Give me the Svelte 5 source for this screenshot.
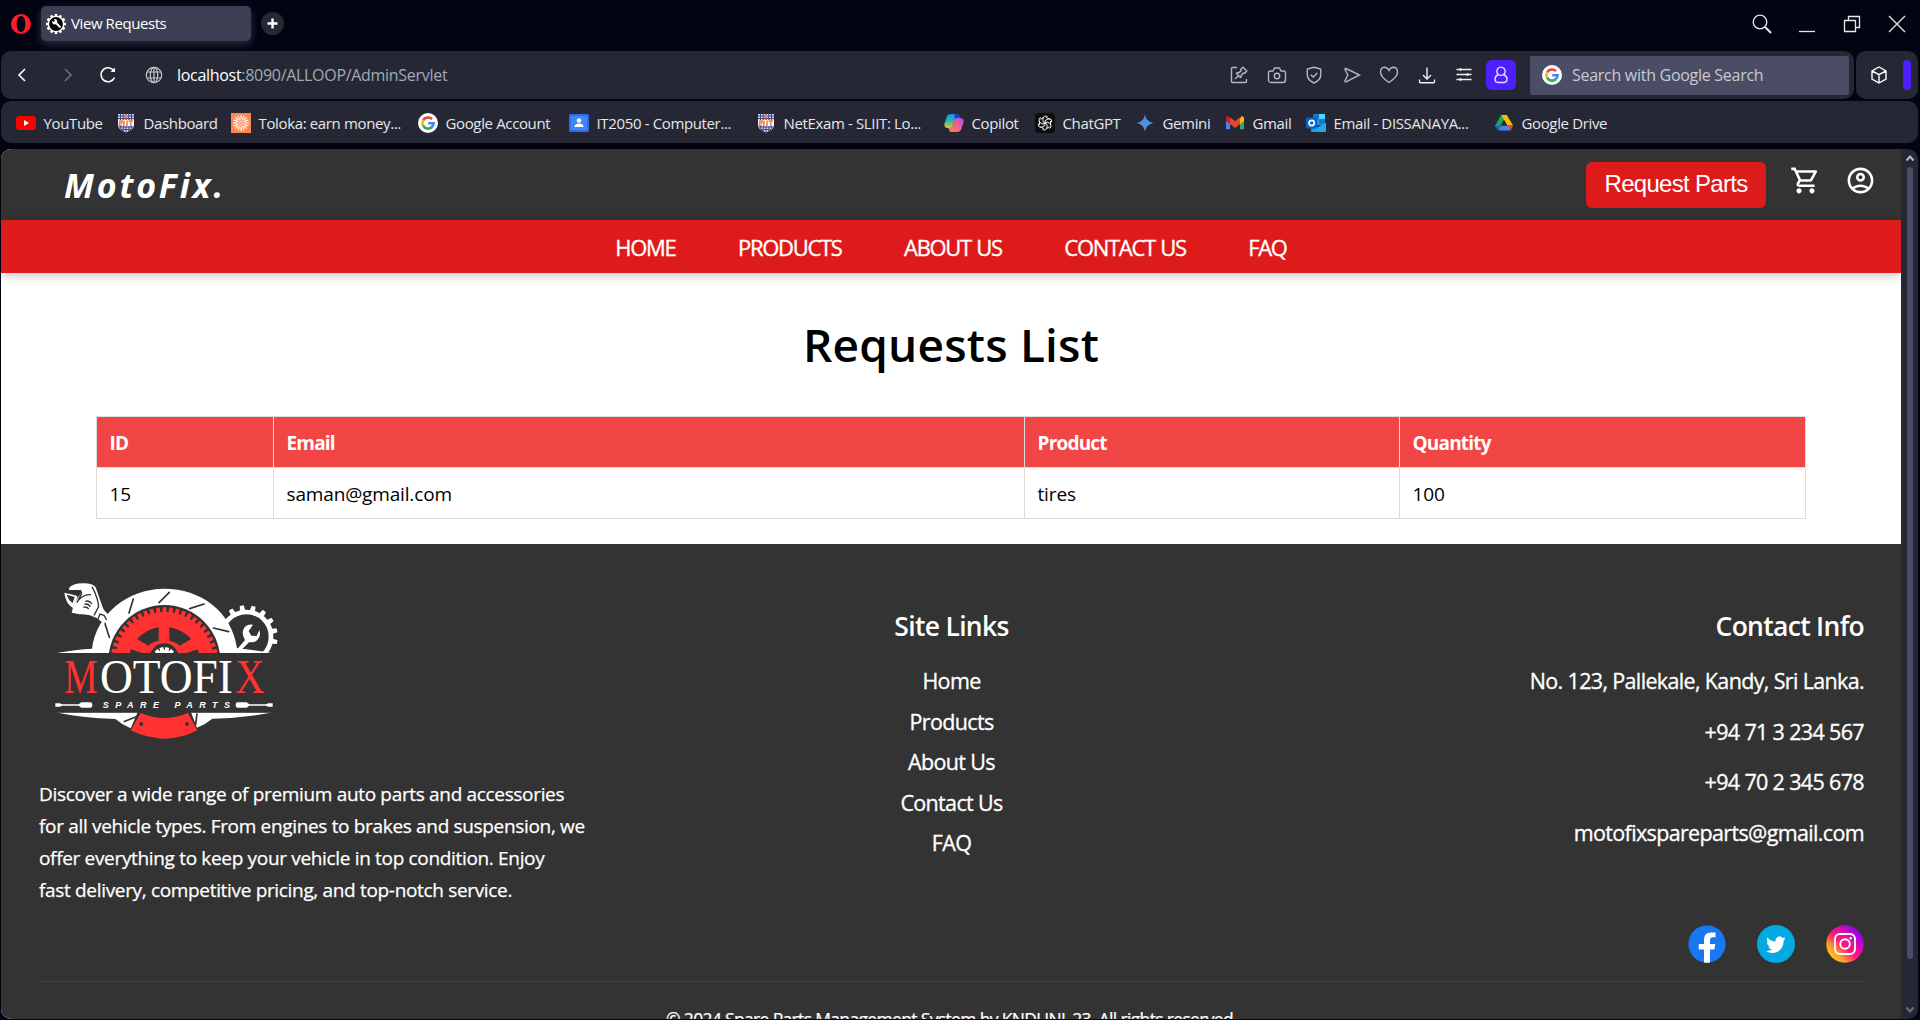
<script>
  const bookmarks = [
    { icon: 'youtube', label: 'YouTube' },
    { icon: 'shield', label: 'Dashboard' },
    { icon: 'toloka', label: 'Toloka: earn money...' },
    { icon: 'google', label: 'Google Account' },
    { icon: 'classroom', label: 'IT2050 - Computer...' },
    { icon: 'shield', label: 'NetExam - SLIIT: Lo...' },
    { icon: 'copilot', label: 'Copilot' },
    { icon: 'chatgpt', label: 'ChatGPT' },
    { icon: 'gemini', label: 'Gemini' },
    { icon: 'gmail', label: 'Gmail' },
    { icon: 'outlook', label: 'Email - DISSANAYA...' },
    { icon: 'drive', label: 'Google Drive' }
  ];
  const navItems = ['HOME', 'PRODUCTS', 'ABOUT US', 'CONTACT US', 'FAQ'];
  const siteLinks = ['Home', 'Products', 'About Us', 'Contact Us', 'FAQ'];
  const contacts = [
    'No. 123, Pallekale, Kandy, Sri Lanka.',
    '+94 71 3 234 567',
    '+94 70 2 345 678',
    'motofixspareparts@gmail.com'
  ];
  const requests = [{ id: 15, email: 'saman@gmail.com', product: 'tires', quantity: 100 }];

  // Gear teeth are laid out around a circle, from one angle to another.
  const spread = (from, to, count) =>
    Array.from({ length: count }, (_, i) => from + ((to - from) * i) / (count - 1));
  const discTeeth = spread(-86, 86, 25);
  const cogTeeth = spread(-30, 100, 7);
  const hubTeeth = spread(-75, 75, 6);
  const faviconTeeth = spread(0, 330, 12);
  const rays = spread(0, 337.5, 16);
  const petals = [0, 60, 120, 180, 240, 300];
</script>

{#snippet googleG()}
  <svg class="i20" viewBox="0 0 20 20">
    <circle cx="10" cy="10" r="10" fill="#fff" />
    <g fill="none" stroke-width="2.6">
      <path d="M14 6.2A5.6 5.6 0 0 0 5.1 7.3" stroke="#ea4335" />
      <path d="M5.2 7.2A5.6 5.6 0 0 0 5.2 12.8" stroke="#fbbc05" />
      <path d="M5.1 12.7A5.6 5.6 0 0 0 13.7 14.2" stroke="#34a853" />
      <path d="M13.4 14.4A5.6 5.6 0 0 0 15.6 10.2H10.2" stroke="#4285f4" />
    </g>
  </svg>
{/snippet}

{#snippet brand(name)}
  {#if name === 'google'}
    {@render googleG()}
  {:else}
    <svg class="i20" viewBox="0 0 20 20">
      {#if name === 'youtube'}
        <rect y="3" width="20" height="14" rx="3.6" fill="#f00" />
        <path d="M8 7l5 3-5 3z" fill="#fff" />
      {:else if name === 'shield'}
        <path d="M2 1h16v12q0 3-8 6.500q-8-3.500-8-6.500z" fill="#d9daf0" />
        <path d="M4.500 1v15M7.200 1v17M10 1v18M12.800 1v17M15.500 1v15M2 3h16M2 5.500h16M2 14h16M5 16.500h10" stroke="#46488f" stroke-width="1.100" />
        <rect x="2" y="7" width="16" height="6" fill="#fff" />
        <path d="M3 8h3v2H3.500v2.500H6M8 7.500V13M11 7.500V13M12.500 8H17M14.800 8v5" fill="none" stroke="#f08030" stroke-width="1.500" />
        <circle cx="10" cy="3.600" r="1.800" fill="#f57c20" />
      {:else if name === 'toloka'}
        <rect width="20" height="20" fill="#ff8551" />
        {#each rays as a}
          <path d="M10 6.500V2" stroke="#fff" stroke-width="1.200" transform="rotate({a} 10 10)" />
        {/each}
        <circle cx="10" cy="10" r="3.600" fill="#ffb08c" />
      {:else if name === 'classroom'}
        <rect y="1" width="20" height="18" rx="1.500" fill="#2a6fe8" />
        <rect x="2" y="3" width="16" height="14" fill="#4285f4" />
        <circle cx="10" cy="7.500" r="2.300" fill="#fff" />
        <path d="M5.500 14q0-3.500 4.500-3.500t4.500 3.500z" fill="#fff" />
      {:else if name === 'copilot'}
        <defs>
          <linearGradient id="cpa" x1="0" y1="0" x2="0" y2="1">
            <stop offset="0" stop-color="#1b8ff0" /><stop offset=".5" stop-color="#2bb8b0" /><stop offset="1" stop-color="#f0c020" />
          </linearGradient>
          <linearGradient id="cpb" x1="1" y1="0" x2="0" y2="1">
            <stop offset="0" stop-color="#a450f0" /><stop offset=".5" stop-color="#f06090" /><stop offset="1" stop-color="#f88a30" />
          </linearGradient>
        </defs>
        <path d="M13.500 1q1.600.2 2.200 4h-3q-2 .3-2.700 3l-1.600 5.400Q7.600 15 5.400 15H3Q0 14.500.4 11L2.700 4Q3.700 1 6.500 1z" fill="url(#cpa)" />
        <path d="M10.500 1h3q1.600.2 2.200 4h-3q-1.500.2-2.200 1.500z" fill="#1548b8" />
        <path d="M12.700 5H17q3 .5 2.600 4l-2.300 7q-1 3-3.800 3H7q-2-.4-2.500-4 3 .3 4-2l1.800-5.500Q11 5.200 12.700 5z" fill="url(#cpb)" />
      {:else if name === 'chatgpt'}
        <rect width="20" height="20" rx="4" fill="#0d0d0d" />
        {#each petals as a}
          <path d="M8 8.800V5.600a2.700 2.700 0 0 1 4.700-1.700M8 8.800l3 1.700M11 4.300l3.600 2" fill="none" stroke="#fff" stroke-width=".9" transform="rotate({a} 10 10)" />
        {/each}
      {:else if name === 'gemini'}
        <defs>
          <linearGradient id="gem"><stop stop-color="#8a72c8" /><stop offset=".5" stop-color="#4f8fe0" /><stop offset="1" stop-color="#35a0d8" /></linearGradient>
        </defs>
        <path d="M10 1.500q1 7 8.500 8.500-7.500 1.500-8.500 8.500-1-7-8.500-8.500 7.500-1.500 8.500-8.500z" fill="url(#gem)" />
      {:else if name === 'gmail'}
        <path d="M1 5v11.300h4V9z" fill="#4285f4" />
        <path d="M19 5v11.300h-4V9z" fill="#34a853" />
        <path d="M15 6v5l4-3V5q-.5-2.500-3-1.500z" fill="#fbbc04" />
        <path d="M5 6v5L1 8V5q.5-2.500 3-1.500z" fill="#c5221f" />
        <path d="M5 11V4.300l5 3.900 5-3.900V11l-5 3.900z" fill="#ea4335" />
      {:else if name === 'outlook'}
        <path d="M7 1h12v11H7z" fill="#28a8ea" />
        <path d="M7 1h6v5H7zM13 6h6v5h-6z" fill="#0f78d0" />
        <path d="M13 1h6v5h-6z" fill="#50d9ff" />
        <path d="M5 10l7.500 4L20 9.500V18q0 1-1 1H6q-1 0-1-1z" fill="#1490df" />
        <path d="M5 18.500L20 9.500V18q0 1-1 1z" fill="#28a8ea" />
        <rect y="4.500" width="11.500" height="11" rx="1" fill="#0a64c0" />
        <circle cx="5.700" cy="10" r="2.600" fill="none" stroke="#fff" stroke-width="1.600" />
      {:else if name === 'drive'}
        <path d="M7.200 2h5.600L4.200 17 1 12.800z" fill="#1ea362" />
        <path d="M7.200 2h5.600L19 12.500h-5.600z" fill="#fbbc04" />
        <path d="M4.500 17.500l2.500-5h12l-2.600 5z" fill="#4285f4" />
        <path d="M1 12.500h5.800l-2.800 5z" fill="#1967d2" />
        <path d="M14 12.500h5l-2.600 5z" fill="#ea4335" />
        <path d="M10 7.200l3 5.300H7z" fill="#252834" />
      {/if}
    </svg>
  {/if}
{/snippet}

<div class="window">
  <div class="titlebar">
    <svg class="opera" viewBox="0 0 20 20">
      <path fill-rule="evenodd" d="M10 0a10 10 0 1 0 0 20 10 10 0 0 0 0-20zm0 2c2.800 0 4.300 3.600 4.300 8s-1.500 8-4.300 8-4.300-3.600-4.300-8 1.500-8 4.300-8z" fill="#ff1b2d" />
    </svg>
    <div class="tab">
      <svg class="i20" viewBox="0 0 20 20">
        {#each faviconTeeth as a}
          <rect x="8.700" y="0" width="2.600" height="4" fill="#fff" transform="rotate({a} 10 10)" />
        {/each}
        <circle cx="10" cy="10" r="7.600" fill="#000" stroke="#fff" stroke-width="1.400" />
        <path d="M6 6.500l1.500 1.500L9 6.500 7.800 5.200q3-.6 3.600 2-.2 1-.2 1.500l3.600 3.600q.6 1.800-1.200 1.700L9.800 10.300q-3.800.8-3.800-3.800z" fill="#fff" />
      </svg>
      <span>View Requests</span>
    </div>
    <div class="newtab">
      <svg viewBox="0 0 23 23"><path d="M11.500 6.500v10M6.500 11.500h10" stroke="#fff" stroke-width="2.400" /></svg>
    </div>
    <div class="wincontrols">
      <svg viewBox="0 0 20 20"><circle cx="8" cy="8" r="6.800" /><path d="M13 13l6 6" stroke-width="2" /></svg>
      <svg viewBox="0 0 20 20"><path d="M2 17.500h16" /></svg>
      <svg viewBox="0 0 20 20"><path d="M2.500 6.500h11v11h-11zM6.500 6.500v-4h11v11h-4" /></svg>
      <svg viewBox="0 0 20 20"><path d="M2 2l16 16M18 2L2 18" /></svg>
    </div>
  </div>

  <div class="toolbar">
    <div class="address">
      <div class="navbtns">
        <svg viewBox="0 0 20 20"><path d="M13 4l-6 6 6 6" stroke="#fff" /></svg>
        <svg viewBox="0 0 20 20"><path d="M7 4l6 6-6 6" stroke="#6b6e79" /></svg>
        <svg viewBox="0 0 20 20"><path d="M16.500 12.500A7 7 0 1 1 16 6" stroke="#fff" /><path d="M12.500 7H17V2.500z" fill="#fff" /></svg>
        <svg viewBox="0 0 20 20"><g stroke="#c6c8ce" stroke-width="1.200"><circle cx="10" cy="10" r="7.700" /><ellipse cx="10" cy="10" rx="3.700" ry="7.700" /><path d="M10 2.300v15.400M3.200 7h13.600M3.200 13h13.600" /></g></svg>
      </div>
      <div class="url"><b>localhost</b>:8090/ALLOOP/AdminServlet</div>
      <div class="tools">
        <svg viewBox="0 0 20 20"><path d="M8 2.500H3.500q-1 0-1 1v13q0 1 1 1h13q1 0 1-1V14M6 14l3.600-3.600M7.500 8.500l4 4q1.500-1 .9-2.500l1.900-2 1.200.4L17.800 6 14 2.200l-2.300 2.300.4 1.200-2 1.900Q8.500 7 7.500 8.500z" /></svg>
        <svg viewBox="0 0 20 20"><path d="M3.500 6H6l1.500-3h5L14 6h2.500Q18.500 6 18.500 8v7q0 2.500-2.500 2.500H4Q1.500 17.500 1.500 15V8q0-2 2-2z" /><circle cx="10" cy="11" r="2.700" /></svg>
        <svg viewBox="0 0 20 20"><path d="M10 2.200L16.700 4v6q0 5-6.700 8-6.700-3-6.700-8V4zM6.800 9.700l2.500 2.400 4-4" /></svg>
        <svg viewBox="0 0 20 20"><path d="M4 3.500L17.500 10 4 16.800q-1.300.4-1-1L5.800 10 3 4.300q-.1-1.300 1-.8z" /></svg>
        <svg viewBox="0 0 20 20"><path d="M10 17.500Q1.500 12 1.500 7q0-4.500 4-4.700Q8.500 2.300 10 5.500q1.500-3.200 4.500-3.200 4 .2 4 4.700 0 5-8.500 10.500z" /></svg>
        <svg viewBox="0 0 20 20"><g stroke="#f0f0f2"><path d="M10 2.500v11M6 10l4 4 4-4M2.500 14.500v2.200q0 1 1 1h13q1 0 1-1v-2.200" /></g></svg>
        <svg viewBox="0 0 20 20"><g stroke="#f0f0f2"><path d="M2.500 4.500h15M2.500 9.500h15M2.500 14.500h15M6.500 3v3M13.500 8v3M6.500 13v3" /></g></svg>
      </div>
      <div class="profile">
        <svg viewBox="0 0 20 20"><path d="M7.300 9.500a4.200 4.200 0 1 1 5.400 0q3.300 1.500 3.300 4.800Q15.800 17.500 13 17.500H7q-2.800 0-3-3.200 0-3.300 3.300-4.800 2.700 1.700 5.400 0" /></svg>
      </div>
      <div class="search">
        {@render googleG()}
        <span>Search with Google Search</span>
      </div>
    </div>
    <div class="side">
      <svg viewBox="0 0 20 20"><path d="M10 2l7 3.800v8.400L10 18l-7-3.800V5.800zM3 5.800l7 3.900 7-3.900M10 9.700V18" /></svg>
      <div class="pill"></div>
    </div>
  </div>

  <div class="bookmarks">
    {#each bookmarks as b}
      <div class="bookmark">{@render brand(b.icon)}<span>{b.label}</span></div>
    {/each}
  </div>

  <div class="viewport">
    <div class="page">
      <header>
        <div class="logo">MotoFix.</div>
        <div class="actions">
          <button>Request Parts</button>
          <svg class="cart" viewBox="0 0 24 24"><path d="M15.550 13c.75 0 1.410-.41 1.750-1.030l3.580-6.490A.996.996 0 0 0 20.010 4H5.210l-.94-2H1v2h2l3.600 7.590-1.350 2.440C4.520 15.370 5.480 17 7 17h12v-2H7l1.100-2h7.450zM6.160 6h12.150l-2.760 5H8.530L6.160 6zM7 18c-1.100 0-1.990.9-1.990 2S5.900 22 7 22s2-.9 2-2-.9-2-2-2zm10 0c-1.100 0-1.990.9-1.990 2s.89 2 1.990 2 2-.9 2-2-.9-2-2-2z" /></svg>
          <svg class="account" viewBox="0 0 24 24"><path d="M12 2C6.480 2 2 6.480 2 12s4.480 10 10 10 10-4.480 10-10S17.520 2 12 2zM7.350 18.500C8.660 17.560 10.260 17 12 17s3.340.56 4.650 1.500C15.340 19.440 13.740 20 12 20s-3.340-.56-4.650-1.500zm10.790-1.380C16.450 15.800 14.320 15 12 15s-4.450.8-6.140 2.120C4.700 15.730 4 13.950 4 12c0-4.420 3.580-8 8-8s8 3.580 8 8c0 1.950-.7 3.730-1.860 5.120zM12 6c-1.930 0-3.500 1.570-3.500 3.500S10.070 13 12 13s3.500-1.570 3.500-3.500S13.930 6 12 6zm0 5c-.83 0-1.500-.67-1.500-1.500S11.170 8 12 8s1.500.67 1.500 1.500S12.830 11 12 11z" /></svg>
        </div>
      </header>
      <nav>
        {#each navItems as item}<a href="#top">{item}</a>{/each}
      </nav>

      <main>
        <h1>Requests List</h1>
        <table>
          <colgroup><col class="c1" /><col class="c2" /><col class="c3" /><col class="c4" /></colgroup>
          <thead>
            <tr><th>ID</th><th>Email</th><th>Product</th><th>Quantity</th></tr>
          </thead>
          <tbody>
            {#each requests as r}
              <tr><td>{r.id}</td><td>{r.email}</td><td>{r.product}</td><td>{r.quantity}</td></tr>
            {/each}
          </tbody>
        </table>
      </main>

      <footer>
        <div class="columns">
          <section class="about">
            <svg class="emblem" viewBox="0 0 840 600">
              <defs>
                <clipPath id="upper"><rect x="0" y="0" width="840" height="279" /></clipPath>
                <clipPath id="lower"><rect x="0" y="458" width="840" height="100" /></clipPath>
              </defs>
              <g clip-path="url(#upper)">
                <!-- side cog with its wrench -->
                {#each cogTeeth as a}
                  <path d="M641 152l2-16h12l2 16z" fill="#fff" transform="rotate({a} 649 230)" />
                {/each}
                <circle cx="649" cy="230" r="74" fill="none" stroke="#fff" stroke-width="14" />
                <path d="M612 279l33-39q-14-22 0-40 10-9 24-6l-13 19 8 14 16 1 8-18q6 19-6 30-9 9-24 6l-34 34z" fill="#fff" />
                <!-- brake disc -->
                <path d="M76 280q60-12 110-14C200 160 295 86 403 86s203 68 218 179q50 4 110 15z" fill="#fff" />
                <circle cx="403" cy="303" r="168" fill="#333" />
                <circle cx="403" cy="303" r="147" fill="#ff3131" />
                {#each discTeeth as a}
                  <path d="M397 162l1-20h11l1 20z" fill="#ff3131" transform="rotate({a} 403 303)" />
                {/each}
                <path d="M321 237q28-29 65-35v41q-18 2-31 14zM418 202q39 6 65 35l-34 20q-13-12-31-14zM302 268l38 12h-40zM504 268l-38 12h40z" fill="#333" />
                <circle cx="403" cy="294" r="44" fill="#333" />
                <circle cx="403" cy="296" r="27" fill="#fff" />
                {#each hubTeeth as a}
                  <rect x="397" y="261" width="12" height="14" fill="#fff" transform="rotate({a} 403 296)" />
                {/each}
                <g stroke="#333" stroke-width="5" stroke-linecap="round">
                  <path d="M418 97l-31 31M310 117l-13 42M522 132l-43 14M550 204l46 11M224 188l14 44" />
                </g>
                <!-- adjustable spanner -->
                <path d="M117 84q10-14 42-14 28-1 38 12l20 57q4 14 18 24l-12 28-24-18q-26-12-50-10l-24-5 6-24 22-34-1-8-34-1z" fill="#fff" />
                <path d="M103 98l32 8q10 2 7 8l-14 30q-22-16-25-46z" fill="#fff" />
                <path d="M110 104l24 7-6 18q-13-9-18-25z" fill="#333" />
                <path d="M118 92h34l3 9-14 27M145 121q16-18 38-17M166 124q12-4 20 8M163 133q12-4 18 8M160 142q12-4 16 6M186 80q18 34 20 60l-14 26M204 178l6-16 12 4 8 14" fill="none" stroke="#333" stroke-width="4" />
              </g>
              <g class="wordmark">
                <text x="103" y="399" textLength="100" lengthAdjust="spacingAndGlyphs" fill="#ff3131">M</text>
                <text x="210" y="399" textLength="399" lengthAdjust="spacingAndGlyphs" fill="#fff">OTOFI</text>
                <text x="616" y="399" textLength="88" lengthAdjust="spacingAndGlyphs" fill="#ff3131">X</text>
              </g>
              <text class="sub" x="218" y="443" textLength="382" fill="#fff">SPARE PARTS</text>
              <path d="M76 430h14l6 3h50l8-6h28q5 0 5 8t-5 8h-28l-8-6H96l-6 3H76zM728 430h-14l-6 3h-50l-8-6h-28q-5 0-5 8t5 8h28l8-6h50l6 3h14z" fill="#fff" />
              <g clip-path="url(#lower)">
                <path d="M76 457h247l-21 48q-24-10-46-28-96-2-180-20zM728 457H483l18 46q26-10 46-27 96-2 181-19z" fill="#fff" />
                <path d="M281 485l38-15M501 460l-4 34" stroke="#333" stroke-width="5" />
                <path d="M332 459q70 30 142 0l28 52q-95 50-200 0z" fill="#ff3131" />
                <g fill="#333"><circle cx="334" cy="492" r="6" /><circle cx="471" cy="492" r="6" /></g>
              </g>
            </svg>
            <p>Discover a wide range of premium auto parts and accessories<br />for all vehicle types. From engines to brakes and suspension, we<br />offer everything to keep your vehicle in top condition. Enjoy<br />fast delivery, competitive pricing, and top-notch service.</p>
          </section>
          <section class="links">
            <h3>Site Links</h3>
            <ul>{#each siteLinks as l}<li>{l}</li>{/each}</ul>
          </section>
          <section class="contact">
            <h3>Contact Info</h3>
            {#each contacts as c}<p>{c}</p>{/each}
            <div class="social">
              <svg viewBox="0 0 38 38"><circle cx="19" cy="19" r="18.600" fill="#1877f2" /><path d="M16 37.500V24.500h-5.200V19H16v-4.500q0-7 7-7h4.500v4.800h-2.700q-2.800 0-2.800 2.900V19h5.300l-.9 5.500H22v13q-3 .4-6 0z" fill="#fff" /></svg>
              <svg viewBox="0 0 38 38"><circle cx="19" cy="19" r="19" fill="#03a9e0" /><path d="M28.600 13.500c-.7.3-1.500.5-2.300.6.8-.5 1.500-1.300 1.800-2.200-.8.500-1.600.8-2.500 1a4 4 0 0 0-6.900 3.700c-3.300-.2-6.300-1.800-8.300-4.200-1.100 1.900-.5 4.200 1.300 5.400-.7 0-1.300-.2-1.800-.5 0 2 1.400 3.600 3.200 4-.6.2-1.200.2-1.800.1.500 1.600 2 2.800 3.800 2.800a8 8 0 0 1-5.900 1.700c8.400 5.300 17.500-.5 17.400-10.400.8-.5 1.500-1.200 2-2z" fill="#fff" /></svg>
              <svg viewBox="0 0 38 38">
                <defs><linearGradient id="ig" x1="0.100" y1="0.900" x2="0.900" y2="0.100"><stop offset="0" stop-color="#ffd600" /><stop offset=".22" stop-color="#ff9a30" /><stop offset=".45" stop-color="#ff1878" /><stop offset=".6" stop-color="#f0109a" /><stop offset="1" stop-color="#7a00ff" /></linearGradient></defs>
                <circle cx="19" cy="19" r="18.700" fill="url(#ig)" />
                <g fill="none" stroke="#fff" stroke-width="1.900"><rect x="9" y="9" width="20" height="20" rx="5" /><circle cx="19" cy="19" r="4.800" /></g>
                <circle cx="24.700" cy="13.300" r="1.200" fill="#fff" />
              </svg>
            </div>
          </section>
        </div>
        <div class="copyright">© 2024 Spare Parts Management System by KNDUNI_23. All rights reserved.</div>
      </footer>
    </div>
    <div class="scrollbar">
      <svg viewBox="0 0 12 12"><path d="M2.500 8.500L6 4.500l3.500 4" stroke="#b9bbc2" /></svg>
      <div class="thumb"></div>
      <svg viewBox="0 0 12 12"><path d="M2.500 3.500L6 7.500l3.500-4" stroke="#6f6f73" /></svg>
    </div>
  </div>
</div>

<style>
  :global(body) { background: #020412; overflow: hidden; }
  * { box-sizing: border-box; }
  svg { display: block; flex: none; }
  .i20 { width: 20px; height: 20px; }
  .window {
    width: 1920px; height: 1020px; background: #020412; overflow: hidden;
    font-family: 'Open Sans', sans-serif; padding: 0 2px 1px 1px;
    display: flex; flex-direction: column;
  }
  .titlebar { height: 51px; display: flex; align-items: flex-start; padding: 6px 11px 0 10px; }
  .opera { width: 20px; height: 20px; margin: 8px 10px 0 0; }
  .tab {
    width: 210px; height: 35px; border-radius: 5px; background: #3c3e54; color: #fff;
    display: flex; align-items: center; gap: 5px; padding-left: 5px; font-size: 15px;
    box-shadow: 0 3px 8px rgba(110, 112, 130, .4); letter-spacing: -.42px;
  }
  .tab span { padding-bottom: 1px; }
  .newtab { width: 23px; height: 23px; border-radius: 50%; background: #252834; margin: 6px 0 0 10px; }
  .wincontrols { margin-left: auto; display: flex; gap: 25px; padding-top: 8px; }
  .wincontrols svg { width: 20px; height: 20px; fill: none; stroke: #e8e8ec; stroke-width: 1.300; }

  .toolbar { height: 48px; display: flex; gap: 2px; }
  .address, .side, .bookmarks { background: #252834; border-radius: 10px; }
  .address { width: 1853px; display: flex; align-items: center; }
  .navbtns { display: flex; padding-left: 11px; width: 176px; }
  .navbtns svg { width: 20px; height: 20px; fill: none; stroke-width: 1.600; margin-right: 26px; }
  .navbtns svg:nth-child(2) { margin-right: 20px; }
  .url { font-size: 16px; color: #a4a8b4; letter-spacing: -.3px; }
  .url b { font-weight: 400; color: #fff; }
  .tools { margin-left: auto; display: flex; gap: 17.500px; }
  .tools svg, .side svg, .profile svg { width: 20px; height: 20px; fill: none; stroke: #b4b6be; stroke-width: 1.400; }
  .profile { width: 30px; height: 30px; border-radius: 6px; background: #4d1fff; margin: 0 14px 0 12px; display: grid; place-items: center; }
  .profile svg { stroke: #e6e0ff; }
  .search {
    width: 319px; height: 39px; margin-right: 5px; border-radius: 2px; background: #4a4d63; color: #c9cad2;
    display: flex; align-items: center; gap: 10px; padding-left: 12px; font-size: 16px; letter-spacing: -.28px;
  }
  .side { width: 62px; display: flex; align-items: center; padding-left: 13px; gap: 14px; }
  .side svg { stroke: #fff; }
  .pill { width: 8px; height: 30px; border-radius: 4px; background: #4d1fff; }

  .bookmarks {
    height: 42px; margin-top: 2px; padding: 2px 0 0 15px; display: grid; align-items: center;
    grid-template-columns: 100px 115px 187px 151px 187px 188px 91px 100px 90px 81px 188px 1fr;
  }
  .bookmark { display: flex; align-items: center; gap: 7.500px; color: #e6e7ea; font-size: 15px; letter-spacing: -.36px; white-space: nowrap; }

  .viewport { height: 870px; margin-top: 6px; border-radius: 10px; overflow: hidden; display: flex; }
  .page { width: 1900px; height: 870px; background: #fff; overflow: hidden; color: #fff; font-weight: 500; }
  header { height: 71px; background: #333; display: flex; padding: 0 25px 0 63px; justify-content: space-between; }
  .logo { font-size: 34px; font-weight: 700; font-style: italic; letter-spacing: 2.800px; line-height: 73px; }
  .actions { display: flex; padding-top: 13px; align-items: flex-start; }
  button {
    width: 180px; height: 46px; border: 0; border-radius: 6px; background: #de1b1b; color: #fff; padding: 0 0 2px;
    font: 24px/44px 'Liberation Sans', sans-serif; letter-spacing: -.7px; margin-right: 24px;
  }
  .cart, .account { width: 31px; height: 31px; fill: #fff; margin-top: 3px; }
  .cart { margin-right: 24px; }
  nav {
    height: 53px; background: #de1b1b; display: flex; justify-content: center; gap: 62.500px;
    box-shadow: 0 2px 10px rgba(0, 0, 0, .25); line-height: 54px; position: relative;
  }
  nav a { color: #fff; text-decoration: none; font-size: 22px; letter-spacing: -1.300px; word-spacing: 1px; -webkit-text-stroke: .35px #fff; }
  main { height: 271px; color: #000; }
  h1 { margin: 0; padding-top: 36px; font-size: 46px; line-height: 70px; font-weight: 600; letter-spacing: .2px; text-align: center; }
  table { width: 1710px; margin: 37px 0 0 95px; border-collapse: collapse; table-layout: fixed; font-size: 19px; font-weight: 400; }
  .c1 { width: 177px; }
  .c2 { width: 751px; }
  .c3 { width: 375px; }
  .c4 { width: 406px; }
  th, td { border: 1px solid #ddd; text-align: left; height: 51px; padding: 2px 12px 0 12.500px; line-height: 28px; letter-spacing: -.15px; }
  th { background: #f24646; color: #fff; font-weight: 700; letter-spacing: -.8px; }

  footer { height: 475px; background: #333; padding: 0 37px 0 38px; font-size: 21.500px; letter-spacing: -.65px; }
  .columns { height: 438px; display: grid; grid-template-columns: 600px 625px 600px; border-bottom: 1px solid #444; }
  .emblem { width: 280px; height: 200px; margin: 16px 0 0 -9px; letter-spacing: 0; }
  .wordmark { font-family: 'Liberation Serif', serif; font-size: 144px; }
  .sub { font-family: 'Liberation Sans', sans-serif; font-size: 27px; font-weight: 700; font-style: italic; }
  .about p { margin: 18px 0 0; font-size: 19px; line-height: 32px; letter-spacing: -.33px; white-space: nowrap; -webkit-text-stroke: .25px #fff; }
  h3 { margin: 0; padding-top: 62px; font-size: 26.500px; line-height: 40px; font-weight: 600; letter-spacing: -.7px; }
  .links { text-align: center; }
  ul { list-style: none; margin: 15px 0 0; padding: 0; line-height: 40.500px; -webkit-text-stroke: .3px #fff; }
  .contact { text-align: right; }
  .contact p { margin: 0; line-height: 50.600px; -webkit-text-stroke: .3px #fff; }
  .contact h3 { margin-bottom: 10px; }
  .social { display: flex; justify-content: flex-end; gap: 31px; margin-top: 67px; }
  .social svg { width: 38px; height: 38px; }
  .copyright { text-align: center; font-size: 17.500px; line-height: 26px; padding-top: 24px; letter-spacing: -.66px; -webkit-text-stroke: .25px #fff; }

  .scrollbar { width: 17px; background: #252834; display: flex; flex-direction: column; align-items: center; padding: 3px 0; }
  .scrollbar svg { width: 12px; height: 12px; fill: none; stroke-width: 2; }
  .thumb { width: 6px; height: 792px; border-radius: 3px; background: #4a4d66; margin: 3px 0 auto; }
</style>
